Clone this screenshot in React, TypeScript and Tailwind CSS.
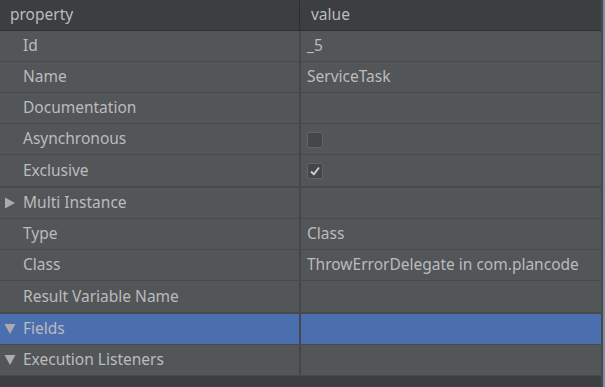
import React from "react";

type Row = {
  name: string;
  value?: string;
  kind?: "text" | "checkbox";
  checked?: boolean;
  arrow?: "right" | "down";
  selected?: boolean;
  thick?: boolean;
};

const rows: Row[] = [
  { name: "Id", value: "_5" },
  { name: "Name", value: "ServiceTask" },
  { name: "Documentation" },
  { name: "Asynchronous", kind: "checkbox", checked: false },
  { name: "Exclusive", kind: "checkbox", checked: true, thick: true },
  { name: "Multi Instance", arrow: "right" },
  { name: "Type", value: "Class" },
  { name: "Class", value: "ThrowErrorDelegate in com.plancode" },
  { name: "Result Variable Name", thick: true },
  { name: "Fields", arrow: "down", selected: true },
  { name: "Execution Listeners", arrow: "down" },
];

function Arrow({ dir }: { dir: "right" | "down" }) {
  return dir === "right" ? (
    <svg width="12" height="12" viewBox="0 0 12 12" className="absolute left-[4px] top-1/2 -translate-y-1/2">
      <path d="M1 0.5 L11 6 L1 11.5 Z" fill="#a9abad" />
    </svg>
  ) : (
    <svg width="12" height="12" viewBox="0 0 12 12" className="absolute left-[4px] top-1/2 -translate-y-1/2">
      <path d="M0.5 1 L11.5 1 L6 11 Z" fill="#a9abad" />
    </svg>
  );
}

function Checkbox({ checked }: { checked?: boolean }) {
  return (
    <div className="mt-[1px] w-[16px] h-[16px] rounded-[2px] border border-[#626567] bg-[#43474a] flex items-center justify-center">
      {checked && (
        <svg width="12" height="12" viewBox="0 0 12 12">
          <path d="M2 6.5 L4.8 9.3 L10 2.5" stroke="#c9cbcc" strokeWidth="2" fill="none" strokeLinejoin="round" />
        </svg>
      )}
    </div>
  );
}

export default function App() {
  return (
    <div
      className="w-[605px] h-[387px] bg-[#3c3f41] flex overflow-hidden text-[#bbbbbb] text-[15.5px]"
      style={{ fontFamily: '"Noto Sans", "Open Sans", sans-serif' }}
    >
      <div className="w-[601px] flex flex-col">
        <div className="h-[31px] flex border-b border-[#2d2f31] bg-[#3c3f41] shrink-0">
          <div className="w-[299px] pl-[10px] flex items-center leading-none">property</div>
          <div className="w-[1px] my-[1px] bg-[#2b2d2e]" />
          <div className="flex-1 pl-[11px] flex items-center leading-none">value</div>
        </div>
        {rows.map((r) => (
          <div
            key={r.name}
            className={`flex shrink-0 ${r.thick ? "h-[33px] border-b-2" : "h-[31px] border-b"} border-[#47494b] bg-[#45484a]`}
          >
            <div
              className={`relative w-[299px] pl-[23px] flex items-center leading-none ${
                r.selected ? "bg-[#4b6eaf]" : "bg-[#525659]"
              }`}
            >
              {r.arrow && <Arrow dir={r.arrow} />}
              {r.name}
            </div>
            <div className="w-[2px] bg-[#45484a]" />
            <div
              className={`flex-1 pl-[6px] flex items-center leading-none ${
                r.selected ? "bg-[#4b6eaf]" : "bg-[#525659]"
              }`}
            >
              {r.kind === "checkbox" ? <Checkbox checked={r.checked} /> : r.value}
            </div>
          </div>
        ))}
        <div className="flex-1 bg-[#3c3f41]" />
      </div>
      <div className="w-[2px] bg-[#46494b]" />
      <div className="w-[2px] bg-[#7e8ba0]" />
    </div>
  );
}
